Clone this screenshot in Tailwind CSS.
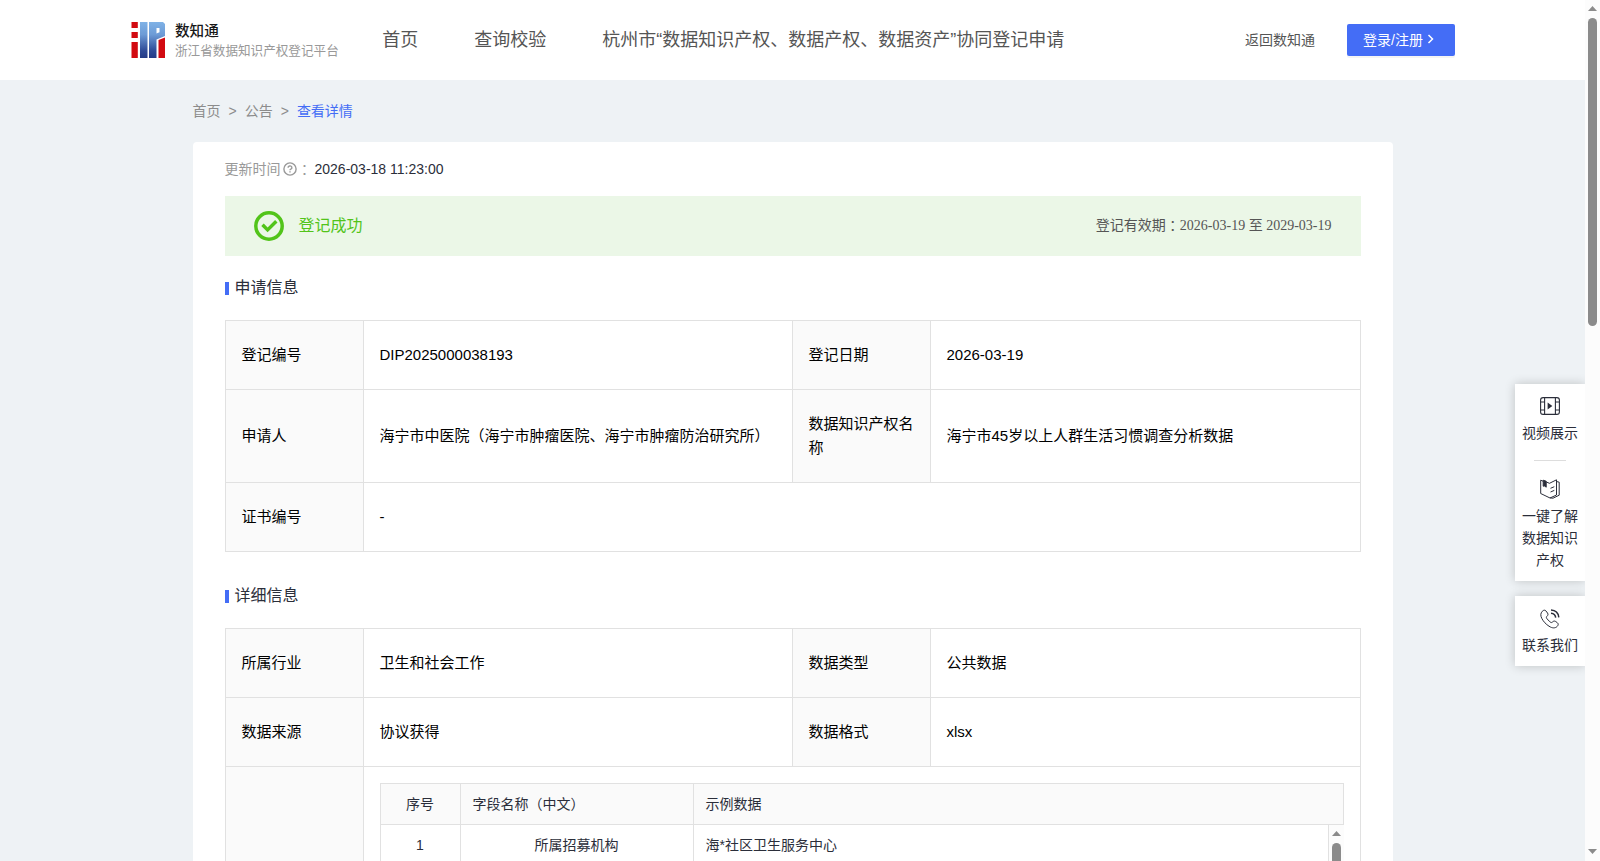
<!DOCTYPE html>
<html lang="zh-CN">
    <head>
        <meta charset="UTF-8">
        <meta name="viewport" content="width=device-width, initial-scale=1.0">
        <title>数知通</title>
        <script src="https://cdn.jsdelivr.net/npm/@tailwindcss/browser@4"></script>
    </head>
    <body class="flex h-screen overflow-hidden bg-[#eef2f5] font-['Liberation_Sans','Noto_Sans_CJK_SC',sans-serif] text-sm text-[#2b2e3a]">
        <div class="h-screen w-[1585px] shrink-0 overflow-hidden">
            <!-- Header -->
            <header class="flex h-20 items-center bg-white pl-[131px] pr-[130px] text-[#555]">
                <svg class="h-9 w-[34px]" viewBox="0 0 34 36">
                    <defs>
                        <linearGradient id="blue" x1="0" y1="0" x2="0" y2="1">
                            <stop offset="0" stop-color="#7fb2e6"/>
                            <stop offset="0.35" stop-color="#6d9bd6"/>
                            <stop offset="0.8" stop-color="#2e4a97"/>
                            <stop offset="1" stop-color="#233a86"/>
                        </linearGradient>
                    </defs>
                    <path fill="#d20a11" d="M0.5 0h6.3v6H0.5zM0.5 10h6.3v6H0.5zM0.5 20h6.3v16H0.5zM27.500 18l6.500-2.500V36h-6.500z"/>
                    <path fill="url(#blue)" d="M9 0h7.500v36H9zM18 0h14l2 2v12l-8.500 3.500V36H18zM25.500 6v5.500l3-1.200V6z" fill-rule="evenodd"/>
                </svg>
                <div class="ml-[10px] pt-0.5">
                    <div class="text-[14.6px] font-medium leading-5 text-[#181818]">数知通</div>
                    <div class="whitespace-nowrap text-[12.6px] leading-5 text-[#999]">浙江省数据知识产权登记平台</div>
                </div>
                <nav class="ml-[43.5px] flex gap-14 whitespace-nowrap text-lg">
                    <a>首页</a>
                    <a>查询校验</a>
                    <a>杭州市“数据知识产权、数据产权、数据资产”协同登记申请</a>
                </nav>
                <a class="ml-auto">返回数知通</a>
                <button class="ml-8 flex h-8 w-[108px] items-center rounded-xs bg-[#446df6] pl-4 text-white shadow-[0_2px_0_rgba(0,0,0,0.045)]">
                    登录/注册
                    <svg class="ml-1 h-3 w-2 -translate-y-px" viewBox="0 0 8 12" fill="none" stroke="currentColor" stroke-width="1.500"><path d="M1.500 2l4 4-4 4"/></svg>
                </button>
            </header>

            <main class="mx-auto w-[1200px]">
                <!-- Breadcrumb -->
                <div class="flex h-[62px] items-center gap-2 text-[#8c8c8c]">
                    <span>首页</span><span>&gt;</span><span>公告</span><span>&gt;</span><span class="text-[#446df6]">查看详情</span>
                </div>

                <div class="rounded-t bg-white px-8 pt-4">
                    <div class="flex h-[22px] items-center text-[#999]">
                        <span>更新时间</span>
                        <svg class="ml-[2px] mr-px size-[14px]" viewBox="0 0 14 14" fill="none" stroke="currentColor" stroke-width="1.400"><circle cx="7" cy="7" r="6.100"/><path d="M5.100 5.700a1.900 1.700 0 1 1 2.800 1.400c-.6.300-.9.500-.9 1.200M7 9.300v1.200"/></svg>
                        <span class="px-[3.5px] [font-feature-settings:'halt']">：</span>
                        <span class="ml-[3px] text-[#2b2e3a]">2026-03-18 11:23:00</span>
                    </div>

                    <!-- Status -->
                    <div class="mt-4 flex h-[60px] items-center bg-[#ebf7e7] px-[29px]">
                        <svg class="size-[30px]" viewBox="0 0 30 30" fill="none" stroke="#52c41a"><circle cx="15" cy="15" r="13.200" stroke-width="3.500"/><path stroke-width="3.500" d="M8.500 13.800l5.100 5.100 8.700-8.600"/></svg>
                        <span class="ml-[15px] text-base text-[#52c41a]">登记成功</span>
                        <div class="ml-auto flex items-center font-['Liberation_Serif','Noto_Sans_CJK_SC',serif] text-[#555]">
                            <span>登记有效期</span>
                            <span class="px-[3.5px] [font-feature-settings:'halt']">：</span>
                            <span>2026-03-19 至 2029-03-19</span>
                        </div>
                    </div>

                    <h2 class="mt-5 flex h-6 items-center text-base"><i class="mr-1.5 mt-px h-[13px] w-1 bg-[#446df6]"></i>申请信息</h2>
                    <table class="mt-5 w-full table-fixed border-collapse text-left text-[15px] leading-6 text-black [&_td]:border [&_td]:border-[#e1e1e1] [&_td]:px-4 [&_th]:border [&_th]:border-[#e1e1e1] [&_th]:bg-[#fafafa] [&_th]:pl-4 [&_th]:pr-[15px] [&_th]:font-normal">
                        <colgroup><col class="w-[138px]"><col class="w-[429px]"><col class="w-[138px]"><col></colgroup>
                        <tr class="h-[69px]"><th>登记编号</th><td>DIP2025000038193</td><th>登记日期</th><td>2026-03-19</td></tr>
                        <tr class="h-[93px]"><th>申请人</th><td>海宁市中医院（海宁市肿瘤医院、海宁市肿瘤防治研究所）</td><th>数据知识产权名称</th><td>海宁市45岁以上人群生活习惯调查分析数据</td></tr>
                        <tr class="h-[69px]"><th>证书编号</th><td colspan="3">-</td></tr>
                    </table>

                    <h2 class="mt-8 flex h-6 items-center text-base"><i class="mr-1.5 mt-px h-[13px] w-1 bg-[#446df6]"></i>详细信息</h2>
                    <table class="mt-5 w-full table-fixed border-collapse text-left text-[15px] leading-6 text-black [&_td]:border [&_td]:border-[#e1e1e1] [&_td]:px-4 [&_th]:border [&_th]:border-[#e1e1e1] [&_th]:bg-[#fafafa] [&_th]:pl-4 [&_th]:pr-[15px] [&_th]:font-normal">
                        <colgroup><col class="w-[138px]"><col class="w-[429px]"><col class="w-[138px]"><col></colgroup>
                        <tr class="h-[69px]"><th>所属行业</th><td>卫生和社会工作</td><th>数据类型</th><td>公共数据</td></tr>
                        <tr class="h-[69px]"><th>数据来源</th><td>协议获得</td><th>数据格式</th><td>xlsx</td></tr>
                        <tr class="h-[96px] align-top">
                            <th></th>
                            <td colspan="3">
                                <!-- Field list -->
                                <div class="mt-4 border-l border-[#e1e1e1] text-sm text-[#2b2e3a]">
                                    <div class="flex h-[42px] items-center border-y border-r border-[#e1e1e1] bg-[#fafafa]">
                                        <div class="flex h-full w-20 items-center justify-center border-r border-[#e1e1e1]">序号</div>
                                        <div class="flex h-full w-[233px] items-center border-r border-[#e1e1e1] pl-3">字段名称（中文）</div>
                                        <div class="pl-3">示例数据</div>
                                    </div>
                                    <div class="flex h-[37px] overflow-hidden">
                                        <div class="flex h-10 w-20 items-center justify-center border-r border-[#e1e1e1]">1</div>
                                        <div class="flex h-10 w-[233px] items-center justify-center border-r border-[#e1e1e1]">所属招募机构</div>
                                        <div class="flex h-10 flex-1 items-center border-r border-[#e1e1e1] pl-3">海*社区卫生服务中心</div>
                                        <div class="flex w-[15px] flex-col items-center bg-[#fcfcfc] pt-1.5">
                                            <svg class="h-[5px] w-[9px] shrink-0" viewBox="0 0 9 5" fill="#8b8b8b"><path d="M4.500 0L9 5H0z"/></svg>
                                            <div class="mt-[7px] w-[9px] flex-1 rounded-t-full bg-[#8b8b8b]"></div>
                                        </div>
                                    </div>
                                </div>
                            </td>
                        </tr>
                    </table>
                </div>
            </main>
        </div>

        <!-- Page scrollbar -->
        <div class="flex w-[15px] shrink-0 flex-col items-center bg-[#fcfcfc] pt-1.5">
            <svg class="h-[5px] w-[9px] shrink-0" viewBox="0 0 9 5" fill="#8b8b8b"><path d="M4.500 0L9 5H0z"/></svg>
            <div class="mt-[7px] h-[308px] w-[9px] rounded-full bg-[#8b8b8b]"></div>
            <svg class="mb-[7px] mt-auto h-[5px] w-[9px] shrink-0" viewBox="0 0 9 5" fill="#8b8b8b"><path d="M4.500 5L9 0H0z"/></svg>
        </div>

        <!-- Floating tools -->
        <div class="absolute right-[15px] top-[370px] flex w-[90px] flex-col gap-[15px] overflow-hidden pb-4 pl-5 pt-[14px] text-center leading-[22px]">
            <div class="flex h-[197px] flex-col items-center bg-white pt-3 shadow-[0_0_10px_rgba(0,0,0,0.2)]">
                <svg class="size-5" viewBox="0 0 20 20" fill="none" stroke="#2b2e3a" stroke-width="1.100"><rect x="0.600" y="1.600" width="18.800" height="16.800" rx="2.500"/><path d="M4.600 1.600v16.800M15.400 1.600v16.800M.6 6h4M.6 14h4M15.400 6h4M15.400 14h4"/><path fill="#2b2e3a" stroke="none" d="M7.600 6.600l4.800 3.400-4.800 3.400z"/></svg>
                <span class="mt-1.5">视频展示</span>
                <i class="mt-4 h-px w-8 shrink-0 bg-[#ddd]"></i>
                <svg class="mt-[18px] size-5 shrink-0" viewBox="0 0 20 20" fill="none" stroke="#2b2e3a" stroke-width="1"><path d="M.7 1.200v13.300l9.300 4.500 6.500-3V.8L9.500 4.300M.7 1.200l2.300 1M6.300 3l3.200 1.300M16.500 2.500l2.700.7v13L13 19.200l-3-.3M10.500 9.300l3.800-1.600M10.500 13l3.800-1.600"/><path fill="#2b2e3a" d="M3.200 1.200l3 1v6L4.700 7l-1.500.2z"/></svg>
                <span class="mt-1.5 w-[60px]">一键了解数据知识产权</span>
            </div>
            <div class="flex h-[70px] flex-col items-center bg-white pt-[13px] shadow-[0_0_10px_rgba(0,0,0,0.2)]">
                <svg class="size-5" viewBox="0 0 20 20" fill="none" stroke="#2b2e3a" stroke-width="1"><path d="M2.300 2.300C3.600.9 5 .8 6 2l1.500 2c.9 1.400.5 2.300-.5 3.200-.9.800-.8 1.500 0 2.600l2.900 3c1 .9 1.800 1 2.600.2 1-1 2-1.300 3.200-.5l1.700 1.300c1.200 1 1 2.300-.2 3.600-1.800 1.900-4.700 2.100-8.200-.2-3-1.900-5.600-4.700-7.100-7.600C.3 6.600.5 4.200 2.300 2.300z"/><path stroke-width="1.500" d="M11 1c4.300.2 7.300 3 7.800 7.300M11 4.300c2.700.2 4.400 1.700 4.700 4.300"/></svg>
                <span class="mt-[5px]">联系我们</span>
            </div>
        </div>
    </body>
</html>
